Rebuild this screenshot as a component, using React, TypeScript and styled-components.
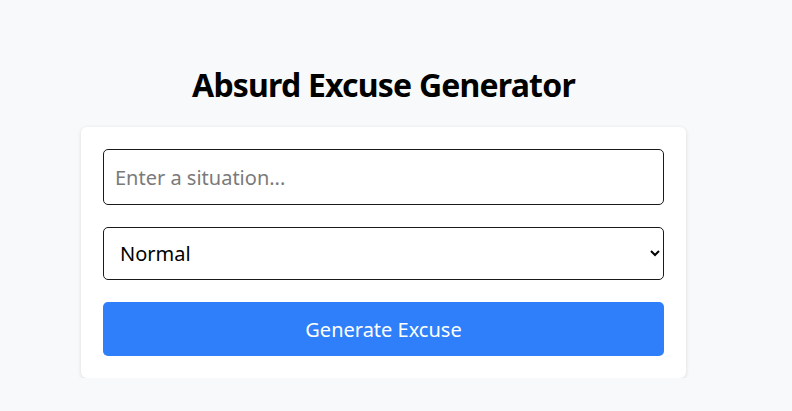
import React, { useState } from 'react'
import styled, { createGlobalStyle } from 'styled-components'

const GlobalStyle = createGlobalStyle`
  html, body {
    margin: 0;
    padding: 0;
    background: #f8f9fa;
    font-family: "Noto Sans", "Open Sans", Arial, sans-serif;
  }
`

const Page = styled.div`
  width: 767px;
  display: flex;
  flex-direction: column;
  align-items: center;
  padding-top: 63px;
`

const Title = styled.h1`
  margin: 0 0 20px;
  font-size: 32px;
  line-height: 44px;
  font-weight: 700;
  color: #000;
  letter-spacing: -0.8px;
`

const Card = styled.div`
  width: 605px;
  box-sizing: border-box;
  background: #fff;
  border-radius: 6px;
  box-shadow: 0 1px 4px rgba(0, 0, 0, 0.12);
  padding: 22px;
  display: flex;
  flex-direction: column;
  gap: 22px;
`

const Field = styled.input`
  box-sizing: border-box;
  width: 100%;
  height: 56px;
  padding: 0 11px;
  border: 1px solid #1a1a1a;
  border-radius: 5px;
  font-family: inherit;
  font-size: 20px;
  color: #000;
  outline: none;
  &::placeholder {
    color: #7a7a7a;
  }
`

const Select = styled.select`
  box-sizing: border-box;
  width: 100%;
  height: 53px;
  padding: 0 12px;
  border: 1px solid #1a1a1a;
  border-radius: 5px;
  font-family: inherit;
  font-size: 20px;
  color: #000;
  background: #fff;
  outline: none;
`

const Button = styled.button`
  height: 54px;
  border: none;
  border-radius: 5px;
  background: #2e7ff9;
  color: #fff;
  font-family: inherit;
  font-size: 20px;
  cursor: pointer;
`

export default function App() {
  const [situation, setSituation] = useState('')
  const [mode, setMode] = useState('Normal')

  return (
    <>
      <GlobalStyle />
      <Page>
        <Title>Absurd Excuse Generator</Title>
        <Card>
          <Field
            type="text"
            placeholder="Enter a situation..."
            value={situation}
            onChange={(e) => setSituation(e.target.value)}
          />
          <Select value={mode} onChange={(e) => setMode(e.target.value)}>
            <option>Normal</option>
            <option>Absurd</option>
            <option>Ridiculous</option>
          </Select>
          <Button>Generate Excuse</Button>
        </Card>
      </Page>
    </>
  )
}
